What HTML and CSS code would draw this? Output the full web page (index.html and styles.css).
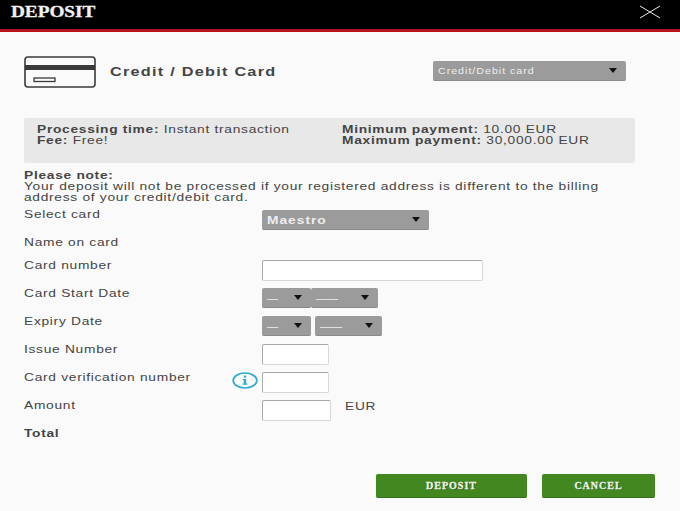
FILE: index.html
```html
<!DOCTYPE html>
<html lang="en">
<head>
<meta charset="utf-8">
<title>Deposit</title>
<link rel="stylesheet" href="styles.css">
</head>
<body>
<header class="top">
  <h1 class="top-title">DEPOSIT</h1>
  <svg class="close" width="22" height="14" viewBox="0 0 22 14"><path d="M1 1L21 13M21 1L1 13" stroke="#e8e8e8" stroke-width="1" fill="none"/></svg>
</header>
<main class="content">
  <section class="method">
    <svg class="card-icon" width="74" height="33" viewBox="0 0 74 33">
      <rect x="1" y="1" width="70" height="30" rx="3" fill="none" stroke="#3a3a3a" stroke-width="1.6"/>
      <rect x="1" y="9" width="70" height="5" fill="#3a3a3a"/>
      <rect x="10" y="22" width="21" height="3.500" fill="none" stroke="#3a3a3a" stroke-width="1.3"/>
    </svg>
    <h2 class="method-title"><span class="wide">Credit / Debit Card</span></h2>
    <div class="select select-method"><span class="wide">Credit/Debit card</span><i class="arrow"></i></div>
  </section>
  <section class="info">
    <div class="info-col">
      <div class="wide"><b>Processing time:</b> Instant transaction</div>
      <div class="wide"><b>Fee:</b> Free!</div>
    </div>
    <div class="info-col">
      <div class="wide"><b>Minimum payment:</b> 10.00 EUR</div>
      <div class="wide"><b>Maximum payment:</b> 30,000.00 EUR</div>
    </div>
  </section>
  <p class="note wide"><b>Please note:</b><br>Your deposit will not be processed if your registered address is different to the billing<br>address of your credit/debit card.</p>
  <form class="form">
    <div class="row"><span class="label"><span class="wide">Select card</span></span><div class="select select-card"><span class="wide">Maestro</span><i class="arrow"></i></div></div>
    <div class="row row-short"><span class="label"><span class="wide">Name on card</span></span></div>
    <div class="row"><span class="label"><span class="wide">Card number</span></span><input class="input input-long" type="text"></div>
    <div class="row"><span class="label"><span class="wide">Card Start Date</span></span><div class="dates"><div class="select select-d">—<i class="arrow"></i></div><div class="select select-m">——<i class="arrow"></i></div></div></div>
    <div class="row"><span class="label"><span class="wide">Expiry Date</span></span><div class="dates dates-gap"><div class="select select-d">—<i class="arrow"></i></div><div class="select select-m">——<i class="arrow"></i></div></div></div>
    <div class="row"><span class="label"><span class="wide">Issue Number</span></span><input class="input input-short" type="text"></div>
    <div class="row"><span class="label"><span class="wide">Card verification number</span></span>
      <svg class="info-icon" width="26" height="17" viewBox="0 0 26 17"><ellipse cx="13" cy="8.500" rx="11.800" ry="7.500" fill="none" stroke="#2ba9cf" stroke-width="1.700"/><rect x="11.800" y="3.600" width="2.400" height="2" fill="#2ba9cf"/><path d="M10.800 7h3.400v4.500h1.200v1.200h-4.800v-1.200h1.200V8.200h-1z" fill="#2ba9cf"/></svg>
      <input class="input input-short" type="text"></div>
    <div class="row"><span class="label"><span class="wide">Amount</span></span><input class="input input-amount" type="text"><span class="currency wide">EUR</span></div>
    <div class="row"><span class="label label-total"><span class="wide">Total</span></span></div>
  </form>
  <div class="actions">
    <button class="btn btn-deposit" type="button">DEPOSIT</button>
    <button class="btn btn-cancel" type="button">CANCEL</button>
  </div>
</main>
</body>
</html>
```
FILE: styles.css
```css
* { box-sizing: border-box; }
html, body { margin: 0; height: 100%; }
body {
  width: 680px;
  height: 511px;
  overflow: hidden;
  background: #fafafa;
  color: #444;
  font-family: "Liberation Sans", Arial, sans-serif;
  font-size: 11px;
}
.wide {
  display: block;
  width: fit-content;
  transform: scaleX(1.25);
  transform-origin: 0 50%;
  letter-spacing: 0.57px;
  white-space: nowrap;
}
.top {
  height: 32px;
  background: #000;
  border-bottom: 3px solid #b5121b;
  display: flex;
  align-items: center;
  justify-content: space-between;
  padding: 0 19px 0 11px;
}
.top-title {
  margin: 0 0 6px;
  color: #f2f2f2;
  font-family: "Liberation Serif", serif;
  font-size: 16px;
  font-weight: 700;
  transform: scaleX(1.2);
  transform-origin: 0 50%;
  -webkit-text-stroke: 0.3px #f2f2f2;
}
.close { margin-bottom: 5px; }
.content { padding: 0 0 0 24px; }
.method {
  display: flex;
  align-items: center;
  height: 33px;
  margin-top: 24px;
}
.card-icon { flex: none; }
.method-title {
  margin: 0 0 2px 12px;
  width: 323px;
  font-size: 13px;
  font-weight: 700;
  color: #444;
}
.method-title .wide { letter-spacing: 1px; }
.select {
  position: relative;
  background: #9b9b9b;
  color: #eee;
  border-radius: 2px;
  border-bottom: 1px solid #8a8a8a;
  display: flex;
  align-items: center;
  padding-left: 5px;
}
.arrow {
  position: absolute;
  right: 9px;
  top: 50%;
  margin-top: -3px;
  width: 0;
  height: 0;
  border-left: 4px solid transparent;
  border-right: 4px solid transparent;
  border-top: 5px solid #111;
}
.select-method {
  flex: none;
  width: 193px;
  height: 20px;
  margin-bottom: 3px;
  font-size: 8.500px;
}
.select-method .wide { letter-spacing: 0.8px; }
.info {
  display: flex;
  width: 611px;
  height: 45px;
  margin-top: 29px;
  padding: 6px 0 0 13px;
  background: #e8e8e8;
  border-radius: 2px;
  line-height: 11px;
}
.info-col { flex: none; width: 305px; }
.info b { font-weight: 700; }
.note {
  margin: 7px 0 0;
  line-height: 11px;
}
.form { margin-top: 5px; }
.row {
  display: flex;
  align-items: flex-start;
  height: 28px;
  position: relative;
}
.row-short { height: 23px; }
.label {
  flex: none;
  width: 238px;
  line-height: 13px;
}
.label-total { font-weight: 700; }
.select-card {
  width: 167px;
  height: 20px;
  margin-top: 2px;
  font-weight: 700;
}
.select-card .wide { letter-spacing: 0.8px; }
.input {
  height: 21px;
  margin: 1px 0 0;
  background: #fff;
  border: 1px solid #d8d8d8;
  border-top-color: #a8a8a8;
  border-left-color: #a8a8a8;
  border-radius: 2px;
  padding: 0;
}
.input-long { width: 221px; }
.input-short { width: 67px; }
.input-amount { width: 69px; }
.dates {
  display: flex;
  margin-top: 1px;
}
.dates-gap { gap: 4px; }
.dates .select { height: 20px; }
.select-d { width: 49px; }
.select-m { width: 67px; }
.info-icon {
  position: absolute;
  left: 208px;
  top: 1px;
}
.currency {
  margin: 1px 0 0 14px;
  line-height: 13px;
}
.actions {
  display: flex;
  gap: 15px;
  margin: 19px 0 0 352px;
}
.btn {
  height: 24px;
  padding: 0;
  background: #42871f;
  border: 0;
  border-bottom: 1px solid #356d18;
  border-radius: 2px;
  color: #eef3ea;
  font-family: "Liberation Serif", serif;
  font-size: 10px;
  font-weight: 700;
  letter-spacing: 1px;
  text-shadow: 1px 1px 0 #2e5c15;
  -webkit-text-stroke: 0.3px #eef3ea;
}
.btn-deposit { width: 151px; }
.btn-cancel { width: 113px; }
```
